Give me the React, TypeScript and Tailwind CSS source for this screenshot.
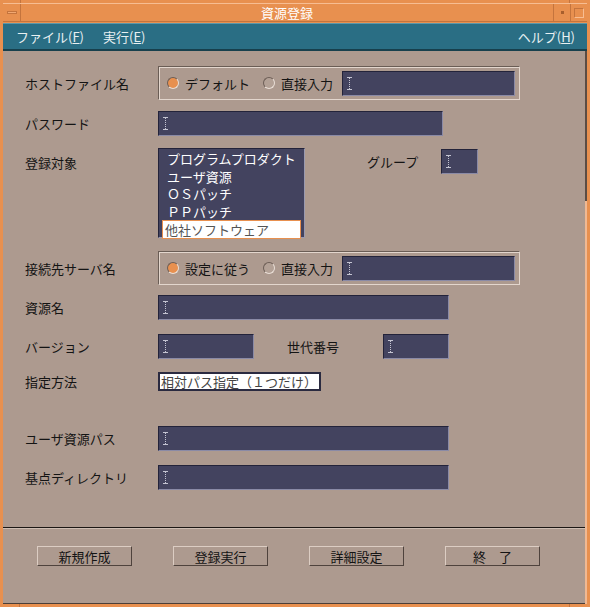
import type { ReactNode } from 'react'

const font = { fontFamily: '"Noto Sans CJK JP", "Liberation Sans", sans-serif' }

function Cursor() {
  return (
    <svg width="5" height="13" viewBox="0 0 5 13" className="shrink-0">
      <path d="M0 0.5h5M0 12.5h5" stroke="#c4c4d2" />
      <path d="M2.5 1v11" stroke="#c4c4d2" strokeDasharray="1 1" />
    </svg>
  )
}

function Field({ className }: { className: string }) {
  return (
    <div
      className={`flex h-[25px] shrink-0 items-center border border-t-[#23233a] border-l-[#23233a] border-r-[#8a8aa6] border-b-[#8a8aa6] bg-[#43435f] pl-[4px] ${className}`}
    >
      <Cursor />
    </div>
  )
}

function Radio({ on }: { on?: boolean }) {
  return (
    <span
      className={`h-[12px] w-[12px] shrink-0 rounded-full border border-t-[#6c5e56] border-l-[#6c5e56] border-r-[#eadfd7] border-b-[#eadfd7] ${
        on ? 'bg-[#e8904f]' : 'bg-[#b3a196]'
      }`}
    />
  )
}

function RadioBox({ first }: { first: string }) {
  return (
    <div className="flex h-[34px] w-[362px] items-center border border-t-[#6a5d55] border-l-[#6a5d55] border-r-[#e3d6cd] border-b-[#e3d6cd] pl-[8px] pr-[4px] shadow-[inset_1px_1px_0_#e3d6cd]">
      <div className="flex w-[96px] items-center gap-[6px]">
        <Radio on />
        <span>{first}</span>
      </div>
      <div className="flex items-center gap-[6px]">
        <Radio />
        <span>直接入力</span>
      </div>
      <Field className="ml-[9px] w-[173px]" />
    </div>
  )
}

function Row({ label, mt, children, top }: { label: string; mt: string; children: ReactNode; top?: boolean }) {
  return (
    <div className={`flex ${top ? 'items-start' : 'items-center'} ${mt}`}>
      <div className={`w-[133px] shrink-0 ${top ? 'pt-[5px]' : ''}`}>{label}</div>
      {children}
    </div>
  )
}

const targets = ['プログラムプロダクト', 'ユーザ資源', 'ＯＳパッチ', 'ＰＰパッチ']

const buttons = ['新規作成', '登録実行', '詳細設定', '終　了']

export default function App() {
  return (
    <div style={font} className="flex h-[607px] w-[590px] flex-col bg-[#e8904f] text-[13px] leading-[19px]">
      {/* top frame */}
      <div className="flex h-[3px]">
        <div className="w-[21px] border-r border-r-[#c4743d]" />
        <div className="flex-1 border-r border-r-[#c4743d]" />
        <div className="w-[20px]" />
      </div>

      <div className="flex flex-1 flex-col px-[3px]">
        {/* title bar */}
        <div className="flex h-[19px] border-t border-t-[#f7bd92] border-b border-b-[#c4743d]">
          <div className="flex w-[18px] items-center justify-center border-r border-r-[#c4743d]">
            <span className="h-[3px] w-[10px] border border-[#c4743d] bg-[#f2a872]" />
          </div>
          <div className="flex flex-1 items-center justify-center text-white">資源登録</div>
          <div className="flex w-[17px] items-center justify-center border-l border-l-[#c4743d]">
            <span className="h-[3px] w-[3px] bg-[#a85f2d]" />
          </div>
          <div className="flex w-[17px] items-center justify-center border-l border-l-[#c4743d]">
            <span className="h-[10px] w-[10px] border border-t-[#c4743d] border-l-[#c4743d] border-r-[#f7bd92] border-b-[#f7bd92]" />
          </div>
        </div>

        {/* menu bar */}
        <div className="mt-[1px] flex h-[28px] items-center border-t border-t-[#5b98ab] border-b-2 border-b-[#17404d] bg-[#2a6e84] pl-[13px] pr-[12px] text-[#e8f0f2]">
          <span>
            ファイル(<u>F</u>)
          </span>
          <span className="ml-[19px]">
            実行(<u>E</u>)
          </span>
          <span className="ml-auto">
            ヘルプ(<u>H</u>)
          </span>
        </div>

        {/* body */}
        <div className="flex flex-1">
          <div className="flex flex-1 flex-col border-b border-b-[#4a3e38] bg-[#ad9a8f] text-[#141414]">
            <div className="flex flex-col pl-[22px]">
              <Row label="ホストファイル名" mt="mt-[15px]">
                <RadioBox first="デフォルト" />
              </Row>

              <Row label="パスワード" mt="mt-[11px]">
                <Field className="w-[285px]" />
              </Row>

              <Row label="登録対象" mt="mt-[12px]" top>
                <div className="flex h-[90px] w-[147px] flex-col border border-t-[#23233a] border-l-[#23233a] border-r-[#9a9ab0] border-b-[#9a9ab0] bg-[#43435f] px-[3px] pt-[1px] text-white">
                  {targets.map((t) => (
                    <div key={t} className="h-[17.5px] pl-[5px] leading-[17.5px]">
                      {t}
                    </div>
                  ))}
                  <div className="h-[19px] border border-[#e8904f] bg-white pl-[2px] leading-[17px] text-[#555]">
                    他社ソフトウェア
                  </div>
                </div>
                <div className="ml-[62px] flex items-center pt-[1px]">
                  <span className="w-[52px]">グループ</span>
                  <Field className="ml-[22px] w-[37px]" />
                </div>
              </Row>

              <Row label="接続先サーバ名" mt="mt-[13px]">
                <RadioBox first="設定に従う" />
              </Row>

              <Row label="資源名" mt="mt-[10px]">
                <Field className="w-[291px]" />
              </Row>

              <Row label="バージョン" mt="mt-[14px]">
                <Field className="w-[96px]" />
                <span className="ml-[33px] w-[96px]">世代番号</span>
                <Field className="w-[66px]" />
              </Row>

              <Row label="指定方法" mt="mt-[13px]">
                <div className="flex h-[19px] w-[163px] items-center border-2 border-[#2a2a40] bg-white pl-[1px] leading-[15px] text-[#444]">
                  相対パス指定（１つだけ）
                </div>
              </Row>

              <Row label="ユーザ資源パス" mt="mt-[35px]">
                <Field className="w-[291px]" />
              </Row>

              <Row label="基点ディレクトリ" mt="mt-[14px]">
                <Field className="w-[291px]" />
              </Row>
            </div>

            <div className="flex-1" />

            <div className="h-[2px] border-t border-t-[#1c1714] border-b border-b-[#cdbdb2]" />
            <div className="flex h-[74px] gap-[41px] pl-[34px] pt-[17px]">
              {buttons.map((b) => (
                <button
                  key={b}
                  className="flex h-[20px] w-[95px] items-center justify-center border border-t-[#dccdc3] border-l-[#dccdc3] border-r-[#4f433d] border-b-[#4f433d] bg-[#ad9a8f] text-[13px] text-[#141414]"
                >
                  {b}
                </button>
              ))}
            </div>
          </div>
          {/* right frame edge */}
          <div className="flex w-[2px] flex-col">
            <div className="h-[150px] bg-[#5a4c44]" />
            <div className="flex-1 bg-[#f0b993]" />
          </div>
        </div>
      </div>

      {/* bottom frame */}
      <div className="flex h-[3px]">
        <div className="w-[20px] border-r border-r-[#c4743d]" />
        <div className="flex-1 border-r border-r-[#c4743d]" />
        <div className="w-[20px]" />
      </div>
    </div>
  )
}
